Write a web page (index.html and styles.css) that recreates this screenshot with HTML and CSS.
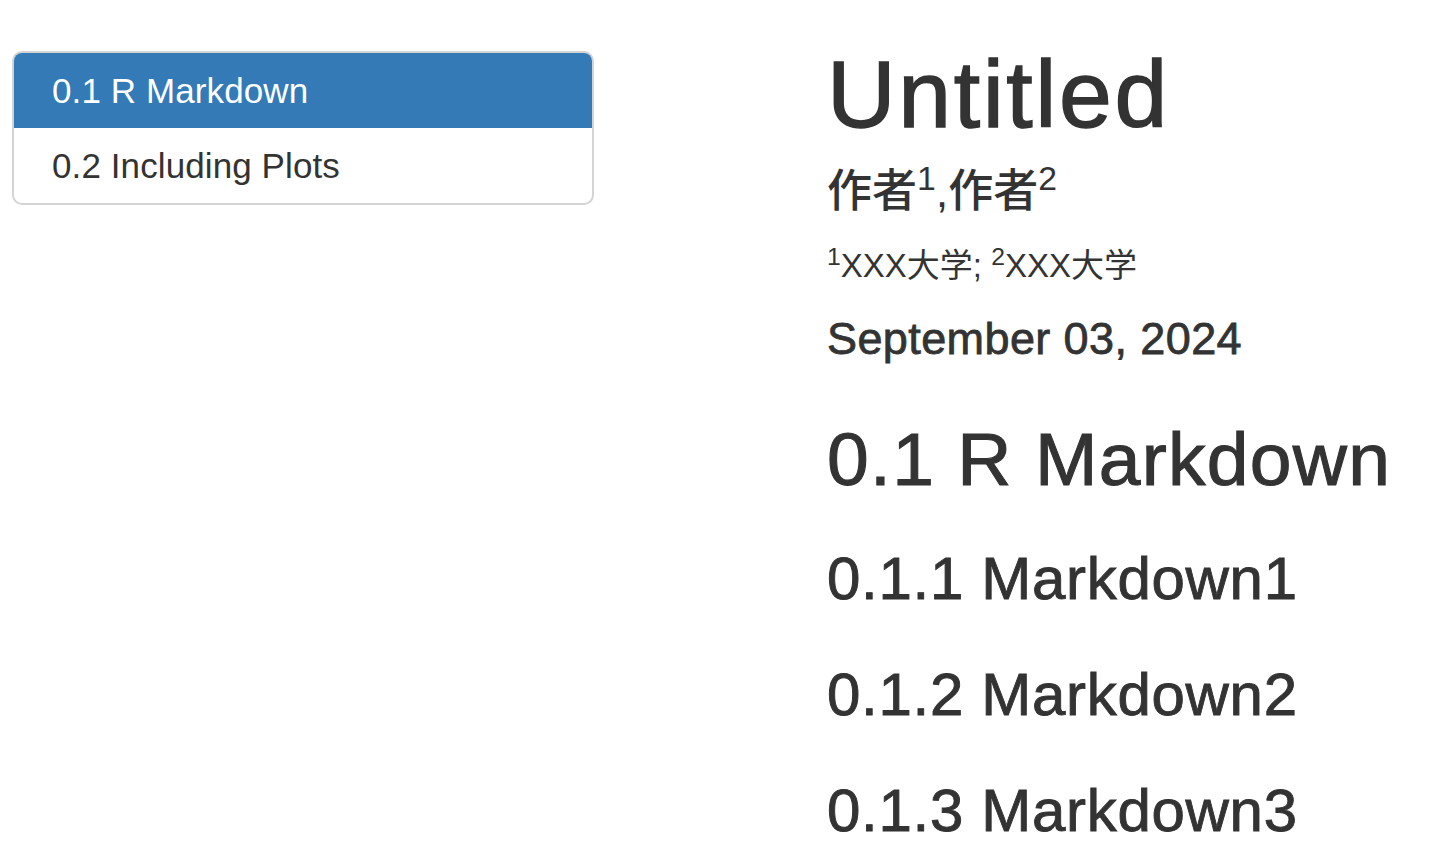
FILE: index.html
```html
<!DOCTYPE html>
<html lang="zh">
<head>
<meta charset="utf-8">
<title>Untitled</title>
<link rel="stylesheet" href="styles.css">
</head>
<body>
<div class="page">
  <nav class="toc">
    <div class="toc-item active">0.1 R Markdown</div>
    <div class="toc-item">0.2 Including Plots</div>
  </nav>
  <main class="main">
    <h1 class="title">Untitled</h1>
    <h4 class="author">作者<sup>1</sup>,作者<sup>2</sup></h4>
    <p class="affil"><sup>1</sup>XXX大学; <sup>2</sup>XXX大学</p>
    <h4 class="date">September 03, 2024</h4>
    <h2 class="h2">0.1 R Markdown</h2>
    <h3 class="h3">0.1.1 Markdown1</h3>
    <h3 class="h3">0.1.2 Markdown2</h3>
    <h3 class="h3">0.1.3 Markdown3</h3>
  </main>
</div>
</body>
</html>
```
FILE: styles.css
```css
html, body {
  margin: 0;
  padding: 0;
  background: #fff;
}
body {
  font-family: "Liberation Sans", Arial, "Noto Sans CJK SC", sans-serif;
  color: #333;
  overflow: hidden;
}
.page {
  display: flex;
  align-items: flex-start;
  padding-left: 12px;
}
.toc {
  width: 582px;
  box-sizing: border-box;
  margin-top: 51px;
  border: 2px solid #d4d4d4;
  border-radius: 10px;
  overflow: hidden;
  flex: none;
}
.toc-item {
  height: 75px;
  line-height: 75px;
  font-size: 35px;
  padding-left: 38px;
  color: #333;
  letter-spacing: 0.1px;
}
.toc-item.active {
  background: #337ab7;
  color: #fff;
}
.main {
  margin-left: 233px;
  padding-top: 42px;
}
.main h1, .main h2, .main h3, .main h4, .main p {
  margin: 0;
}
.title {
  font-size: 95px;
  line-height: 104px;
  font-weight: 400;
  letter-spacing: 2.6px;
  -webkit-text-stroke: 1.4px #333;
}
.author {
  font-size: 45px;
  line-height: 50px;
  font-weight: 500;
  margin-top: 21px !important;
}
.affil {
  font-size: 33px;
  line-height: 40px;
  margin-top: 29px !important;
}
.date {
  font-size: 45px;
  line-height: 50px;
  font-weight: 400;
  letter-spacing: 0.4px;
  -webkit-text-stroke: 0.8px #333;
  margin-top: 28px !important;
}
.h2 {
  font-size: 75px;
  line-height: 82px;
  font-weight: 400;
  letter-spacing: 1.3px;
  -webkit-text-stroke: 1.1px #333;
  margin-top: 54px !important;
}
.h3 {
  font-size: 60px;
  line-height: 66px;
  font-weight: 400;
  letter-spacing: 0.7px;
  -webkit-text-stroke: 0.9px #333;
  margin-top: 50px !important;
}
.h2 + .h3 {
  margin-top: 46px !important;
}
sup {
  font-size: 75%;
  line-height: 0;
  position: relative;
  top: -0.5em;
  vertical-align: baseline;
}
```
